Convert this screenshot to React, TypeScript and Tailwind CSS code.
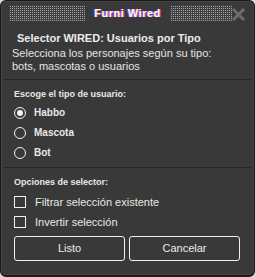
/** Wired selector dialog — "Usuarios por Tipo". */
import { useState } from "react"

const FONT = "font-['Liberation_Sans',Arial,sans-serif]"

function DotBand({ className }: { className: string }) {
  return (
    <div
      className={`h-[16px] shrink-0 bg-[#585858] bg-[image:linear-gradient(90deg,#404040_1px,transparent_1px),linear-gradient(#404040_1px,#a2a2a2_1px)] bg-[length:2px_2px] ${className}`}
    />
  )
}

function Radio({
  label,
  checked,
  onClick,
}: {
  label: string
  checked: boolean
  onClick: () => void
}) {
  return (
    <button type="button" onClick={onClick} className="flex h-[12px] items-center gap-[8px]">
      <span className="flex size-[12px] items-center justify-center rounded-full border-[1.5px] border-[#f2f2f2]">
        {checked && <span className="size-[6px] rounded-full bg-[#f2f2f2]" />}
      </span>
      <span className="text-[10px] font-semibold leading-none text-[#e8e8e8]">{label}</span>
    </button>
  )
}

function Check({ label }: { label: string }) {
  const [on, setOn] = useState(false)
  return (
    <button type="button" onClick={() => setOn(!on)} className="flex h-[12px] items-center gap-[9px]">
      <span className="flex size-[12px] items-center justify-center border border-[#f2f2f2]">
        {on && <span className="size-[6px] bg-[#f2f2f2]" />}
      </span>
      <span className="text-[11px] leading-none text-[#e8e8e8]">{label}</span>
    </button>
  )
}

export default function App() {
  const [kind, setKind] = useState("habbo")

  return (
    <div className={`h-[277px] w-[255px] bg-[#dedbcc] ${FONT}`}>
      <div className="flex h-full w-full flex-col overflow-hidden rounded-[6px] border border-b-2 border-[#1b1b1b] bg-[#393939] shadow-[inset_0_0_0_1px_#444]">
        {/* title bar */}
        <div className="flex h-[26px] items-start pt-[4px] pl-[8px]">
          <DotBand className="w-[76px]" />
          <div className="flex h-[16px] flex-1 items-center justify-center">
            <span className="text-[11px] font-bold leading-none tracking-[0.5px] text-white [text-shadow:-1px_0_#6a5cff,1px_0_#ff3b3b]">
              Furni Wired
            </span>
          </div>
          <DotBand className="w-[62px]" />
          <svg width="13" height="13" viewBox="0 0 13 13" className="mt-[3px] mr-[9px] shrink-0">
            <path d="M2 2 L11 11 M11 2 L2 11" stroke="#6c6c6c" strokeWidth="3" strokeLinecap="square" />
          </svg>
        </div>

        {/* intro */}
        <div className="mt-[5px] pl-[16px] text-[11px] font-bold leading-[13px] text-[#ececec]">
          Selector WIRED: Usuarios por Tipo
        </div>
        <div className="mt-[2px] pl-[11px] text-[11px] leading-[13px] text-[#e4e4e4]">
          Selecciona los personajes según su tipo:
          <br />
          bots, mascotas o usuarios
        </div>

        <div className="mx-[3px] mt-[6px] h-px bg-[#262626]" />

        {/* user type */}
        <div className="px-[13px]">
          <div className="mt-[8px] text-[9px] font-bold leading-[12px] text-[#e8e8e8]">
            Escoge el tipo de usuario:
          </div>
          <div className="mt-[7px] flex flex-col gap-[8px]">
            <Radio label="Habbo" checked={kind === "habbo"} onClick={() => setKind("habbo")} />
            <Radio label="Mascota" checked={kind === "pet"} onClick={() => setKind("pet")} />
            <Radio label="Bot" checked={kind === "bot"} onClick={() => setKind("bot")} />
          </div>
        </div>

        <div className="mx-[3px] mt-[8px] h-px bg-[#262626]" />

        {/* options */}
        <div className="pr-[14px] pl-[13px]">
          <div className="mt-[8px] text-[9px] font-bold leading-[12px] text-[#e8e8e8]">
            Opciones de selector:
          </div>
          <div className="mt-[8px] flex flex-col gap-[8px]">
            <Check label="Filtrar selección existente" />
            <Check label="Invertir selección" />
          </div>
          <div className="mt-[8px] flex gap-[4px]">
            <button
              type="button"
              className="h-[25px] flex-1 rounded-[3px] border border-[#f0f0f0] text-[11px] text-[#ececec]"
            >
              Listo
            </button>
            <button
              type="button"
              className="h-[25px] flex-1 rounded-[3px] border border-[#f0f0f0] text-[11px] text-[#ececec]"
            >
              Cancelar
            </button>
          </div>
        </div>
      </div>
    </div>
  )
}
